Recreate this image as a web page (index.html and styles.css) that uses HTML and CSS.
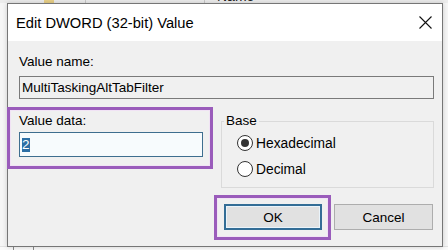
FILE: index.html
```html
<!DOCTYPE html>
<html>
<head>
<meta charset="utf-8">
<link rel="stylesheet" href="styles.css">
</head>
<body>
<div class="desktop">
  <div class="bg-header">
    <span class="bg-col bg-col1"><span class="folder"></span></span>
    <span class="bg-col bg-col2"></span>
    <span class="bg-col bg-col3">Name</span>
  </div>
  <div class="bg-footer">
    <span class="bg-tick t1"></span><span class="bg-tick t2"></span>
  </div>
  <div class="dialog">
    <div class="titlebar">
      <span class="title">Edit DWORD (32-bit) Value</span>
      <span class="close">
        <svg width="13" height="13" viewBox="0 0 13 13"><path d="M0.5 0.5 L12.5 12.5 M12.5 0.5 L0.5 12.5" stroke="#111" stroke-width="1.1" fill="none"/></svg>
      </span>
    </div>
    <div class="content">
      <div class="label">Value name:</div>
      <div class="field readonly">MultiTaskingAltTabFilter</div>
      <div class="row">
        <div class="col-data">
          <div class="label">Value data:</div>
          <div class="field input"><span class="sel">2</span></div>
        </div>
        <fieldset class="base">
          <legend>Base</legend>
          <div class="radio"><span class="circle checked"></span><span>Hexadecimal</span></div>
          <div class="radio second"><span class="circle"></span><span>Decimal</span></div>
        </fieldset>
      </div>
      <div class="buttons">
        <div class="btn default">OK</div>
        <div class="btn">Cancel</div>
      </div>
    </div>
    <div class="mark mark-data"></div>
    <div class="mark mark-ok"></div>
  </div>
</div>
</body>
</html>
```

FILE: styles.css
```css
html, body {
  margin: 0;
  padding: 0;
}
body {
  width: 448px;
  height: 250px;
  overflow: hidden;
  background: #f6f6f6;
  font-family: "Liberation Sans", Arial, sans-serif;
  color: #000;
}
.desktop {
  position: relative;
  width: 448px;
  height: 250px;
  overflow: hidden;
}
.bg-header {
  display: flex;
  height: 3px;
  overflow: hidden;
  background: #ececec;
}
.bg-col {
  display: block;
  height: 3px;
  border-right: 1px solid #c8c8c8;
}
.bg-col1 { width: 85px; position: relative; }
.folder {
  display: block;
  width: 10px;
  height: 3px;
  margin-left: 44px;
  background: #e8cf86;
}
.bg-col2 { width: 118px; }
.bg-col3 {
  flex: 1;
  border-right: none;
  font-size: 14px;
  line-height: 14px;
  margin-top: -11px;
  height: 14px;
  padding-left: 12px;
  color: #222;
}
.bg-footer {
  position: absolute;
  left: 0;
  bottom: 0;
  width: 448px;
  height: 3px;
  background: #fafafa;
  border-top: 1px solid #e2e2e2;
  display: flex;
}
.bg-tick {
  display: block;
  width: 1px;
  height: 3px;
  background: #8a8a8a;
}
.t1 { margin-left: 13px; }
.t2 { margin-left: 19px; }

.dialog {
  position: absolute;
  left: 7px;
  top: 3px;
  width: 434px;
  border: 1px solid #767676;
  background: #f0f0f0;
  box-shadow: 0 0 5px rgba(0, 0, 0, 0.18);
}
.titlebar {
  height: 37px;
  background: #ffffff;
  display: flex;
  align-items: center;
  justify-content: space-between;
  padding-left: 8px;
}
.title {
  font-size: 14.7px;
  color: #000;
}
.close {
  display: flex;
  width: 13px;
  height: 13px;
  margin-right: 10px;
}
.content {
  padding: 13px 8px 16px 11px;
}
.label {
  font-size: 13.5px;
  line-height: 16px;
  height: 16px;
}
.field {
  box-sizing: border-box;
  font-size: 13.5px;
  display: flex;
  align-items: center;
  padding-left: 2px;
}
.readonly {
  margin-top: 6px;
  height: 23px;
  border: 1px solid #7a7a7a;
  background: #f0f0f0;
}
.row {
  display: flex;
  gap: 18px;
  margin-top: 14px;
}
.col-data {
  width: 184px;
}
.input {
  margin-top: 3px;
  height: 25px;
  border: 1px solid #3e6e8f;
  background: #f7fbfd;
  padding-left: 2px;
}
.sel {
  background: #2d6fa5;
  color: #fff;
  line-height: 14px;
  padding: 0 0 0 0;
}
.base {
  box-sizing: border-box;
  width: 213px;
  height: 75px;
  margin: 0;
  padding: 6px 0 0 15px;
  border: 1px solid #dadada;
  min-width: 0;
}
.base legend {
  font-size: 13.5px;
  line-height: 16px;
  padding: 0 2px;
  margin-left: -13px;
}
.radio {
  display: flex;
  align-items: center;
  height: 16px;
  font-size: 13.8px;
}
.radio.second {
  margin-top: 10px;
}
.circle {
  box-sizing: border-box;
  width: 16px;
  height: 16px;
  border: 1px solid #333;
  border-radius: 50%;
  background: #fff;
  margin-right: 3px;
  display: flex;
  align-items: center;
  justify-content: center;
}
.circle.checked::after {
  content: "";
  width: 8px;
  height: 8px;
  border-radius: 50%;
  background: #333;
}
.buttons {
  display: flex;
  justify-content: flex-end;
  gap: 12px;
  margin-top: 16px;
  padding-right: 1px;
}
.btn {
  box-sizing: border-box;
  height: 26px;
  width: 99px;
  border: 1px solid #adadad;
  background: #e1e1e1;
  font-size: 13.5px;
  display: flex;
  align-items: center;
  justify-content: center;
}
.btn.default {
  width: 98px;
  border: 2px solid #336d96;
  box-shadow: inset 0 0 0 1px #eaf4fb;
}
.mark {
  position: absolute;
  box-sizing: border-box;
  border: 3px solid #9a5cbb;
  box-shadow: inset 0 0 0 1px #f1e3f5;
}
.mark-data {
  left: -1px;
  top: 103px;
  width: 206px;
  height: 62px;
}
.mark-ok {
  left: 206px;
  top: 191px;
  width: 117px;
  height: 45px;
}
```
